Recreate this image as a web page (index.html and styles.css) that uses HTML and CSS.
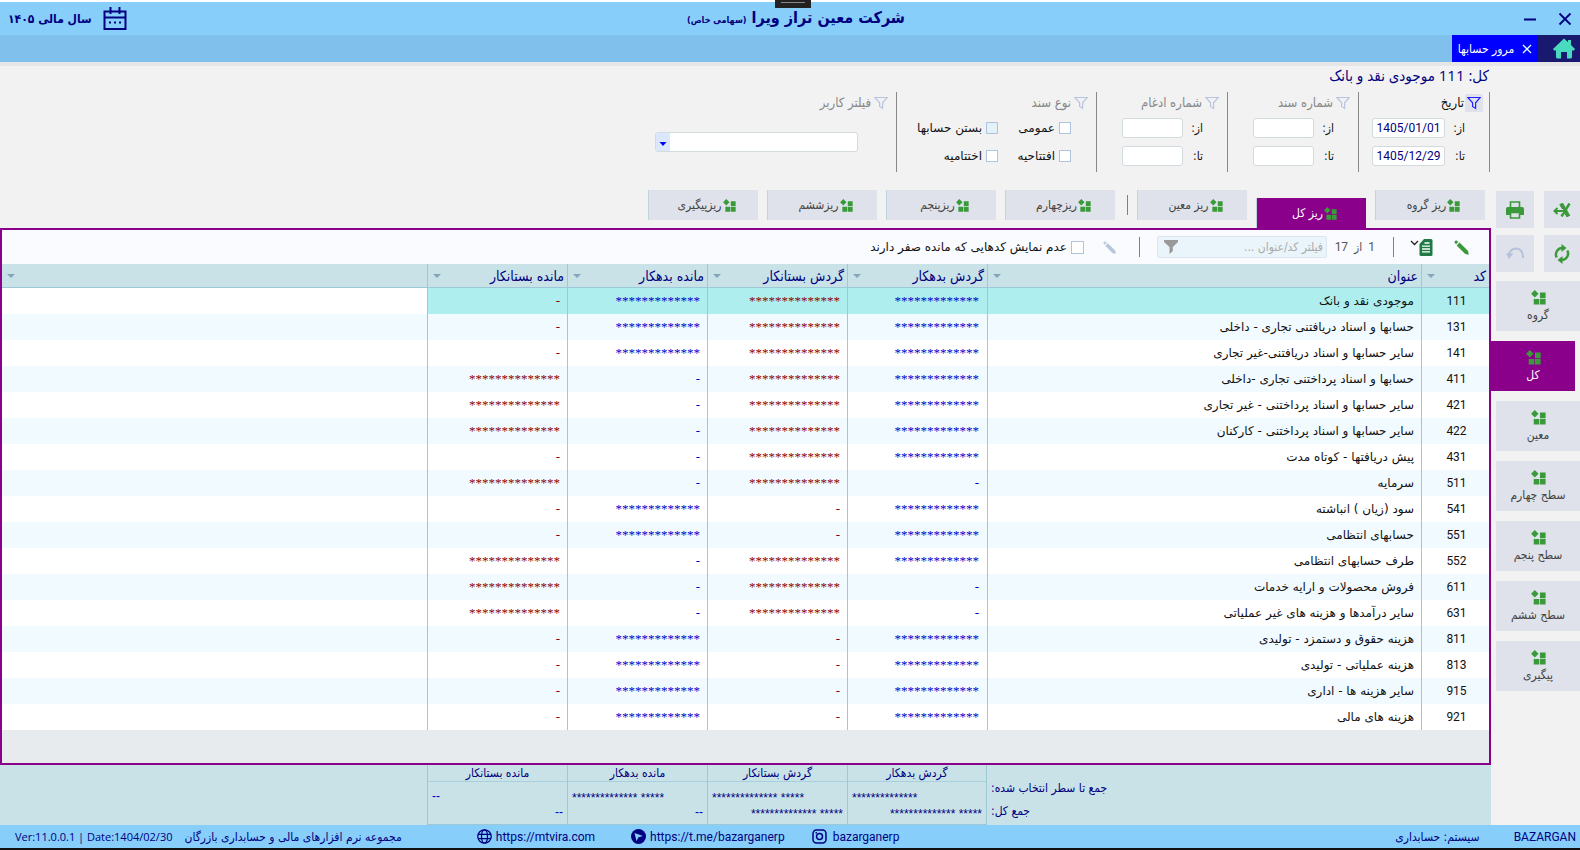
FILE: index.html
```html
<!DOCTYPE html>
<html lang="fa" dir="rtl">
<head>
<meta charset="utf-8">
<title>مرور حسابها</title>
<link rel="stylesheet" href="styles.css">
</head>
<body>
<svg class="defs" aria-hidden="true">
  <symbol id="level" viewBox="0 0 15 15"><path d="M3.800 0l3.700 3.700-3.700 3.700L.1 3.700zM9 2.500h5.600v5.700H9zM2.700 9h5.600v5.600H2.700zM9 9h5.600v5.600H9z" fill="#3a9a3a"/></symbol>
  <symbol id="funnel" viewBox="0 0 14 14"><path d="M.8 1.500h12.400L8.600 6.800v5.700L5.600 10.500V6.800z" fill="none" stroke="currentColor" stroke-width="1.200"/></symbol>
  <symbol id="pencil" viewBox="0 0 15 15"><path d="M.5 2.500Q.3.300 2.600.5L4.300 2 2 4.300zM2.600 5.400l2.900-2.900 8.600 8.400.7 3.800-3.600-.6z" fill="currentColor"/></symbol>
</svg>

<div class="app">
  <header class="titlebar">
    <div class="window-buttons">
      <button class="plain" aria-label="بستن"><svg width="14" height="14" viewBox="0 0 14 14"><path d="M1.500 1.500l11 11m0-11l-11 11" stroke="#000080" stroke-width="1.800"/></svg></button>
      <button class="plain" aria-label="کوچک کردن"><svg width="14" height="14" viewBox="0 0 14 14"><path d="M1 7.500h12" stroke="#000080" stroke-width="2"/></svg></button>
    </div>
    <h1>شرکت معین تراز ویرا <small>(سهامی خاص)</small></h1>
    <div class="year">
      <svg width="24" height="24" viewBox="0 0 24 24" fill="none" stroke="#000080" stroke-width="2"><path d="M1.500 4.500h21v17.500h-21zM1.500 10.500h21M7.500 0v7M16.500 0v7"/><path d="M6 15.500h2m3 0h2m3 0h2"/></svg>
      <strong>سال مالی ۱۴۰۵</strong>
    </div>
    <div class="handle"></div>
  </header>

  <nav class="tabbar">
    <button class="home" aria-label="خانه"><svg width="22" height="21" viewBox="0 0 22 21"><path d="M11 .5L15 4V2h3v5l4 4-1 1.500h-2V19q0 1.500-1.500 1.500H14V14H8v6.500H4.500Q3 20.500 3 19v-6.500H1L0 11z" fill="#48dbc0"/></svg></button>
    <button class="open-tab"><svg width="10" height="10" viewBox="0 0 10 10"><path d="M1 1l8 8m0-8l-8 8" stroke="#dff" stroke-width="1.300"/></svg>مرور حسابها</button>
  </nav>

  <div class="workspace">
    <h2 class="heading">کل: 111 موجودی نقد و بانک</h2>

    <section class="filters">
      <div class="group">
        <div class="group-title on"><button class="plain funnel"><svg width="14" height="14"><use href="#funnel"/></svg></button>تاریخ</div>
        <div class="field"><label for="d1">از:</label><input id="d1" class="date" dir="ltr" value="1405/01/01"></div>
        <div class="field"><label for="d2">تا:</label><input id="d2" class="date" dir="ltr" value="1405/12/29"></div>
      </div>
      <div class="group">
        <div class="group-title"><button class="plain funnel"><svg width="14" height="14"><use href="#funnel"/></svg></button>شماره سند</div>
        <div class="field"><label for="n1">از:</label><input id="n1"></div>
        <div class="field"><label for="n2">تا:</label><input id="n2"></div>
      </div>
      <div class="group">
        <div class="group-title"><button class="plain funnel"><svg width="14" height="14"><use href="#funnel"/></svg></button>شماره ادغام</div>
        <div class="field"><label for="m1">از:</label><input id="m1"></div>
        <div class="field"><label for="m2">تا:</label><input id="m2"></div>
      </div>
      <div class="group kinds">
        <div class="group-title"><button class="plain funnel"><svg width="14" height="14"><use href="#funnel"/></svg></button>نوع سند</div>
        <div class="checks">
          <label><input type="checkbox">عمومی</label>
          <label><input type="checkbox" class="tinted">بستن حسابها</label>
          <label><input type="checkbox">افتتاحیه</label>
          <label><input type="checkbox">اختتامیه</label>
        </div>
      </div>
      <div class="group user">
        <div class="group-title"><button class="plain funnel"><svg width="14" height="14"><use href="#funnel"/></svg></button><label for="user">فیلتر کاربر</label></div>
        <div class="combo"><select id="user"><option></option></select><svg width="14" height="18" viewBox="0 0 14 18"><path d="M3.500 9h7L7 13z" fill="#00f"/></svg></div>
      </div>
    </section>

    <div class="tabs">
      <button class="tab"><svg width="13" height="13"><use href="#level"/></svg>ریز گروه</button>
      <button class="tab current"><svg width="13" height="13"><use href="#level"/></svg>ریز کل</button>
      <button class="tab"><svg width="13" height="13"><use href="#level"/></svg>ریز معین</button>
      <span class="rule"></span>
      <button class="tab"><svg width="13" height="13"><use href="#level"/></svg>ریزچهارم</button>
      <button class="tab"><svg width="13" height="13"><use href="#level"/></svg>ریزپنجم</button>
      <button class="tab"><svg width="13" height="13"><use href="#level"/></svg>ریزششم</button>
      <button class="tab"><svg width="13" height="13"><use href="#level"/></svg>ریزپیگیری</button>
    </div>

    <aside class="side">
      <div class="tools">
        <button aria-label="اکسل"><svg width="18" height="14" viewBox="0 0 18 14" fill="none" stroke="#3a9a3a"><path d="M8 .5L15.500 13.500" stroke-width="4"/><path d="M16.500 .5L8.500 13.500" stroke-width="2.500"/><path d="M10 8H1.500M4.500 5L1.500 8l3 3" stroke="#dfe2ea" stroke-width="4"/><path d="M10 8H1.500M4.500 5L1.500 8l3 3" stroke-width="2"/></svg></button>
        <button aria-label="چاپ"><svg width="18" height="18" viewBox="0 0 18 18"><path d="M4.500 6V1h9v5" fill="none" stroke="#3a9a3a" stroke-width="1.600"/><path d="M2 6h14q2 0 2 2v6H0V8q0-2 2-2z" fill="#3a9a3a"/><path d="M4.500 11.500h9v5.500h-9z" fill="#dfe2ea" stroke="#3a9a3a" stroke-width="1.600"/></svg></button>
        <button aria-label="بازخوانی"><svg width="16" height="20" viewBox="0 0 16 20" fill="none" stroke="#3a9a3a" stroke-width="2.500"><path d="M2.700 13.500A6.500 6.500 0 0 1 9 4M13.300 6.500A6.500 6.500 0 0 1 7 16"/><path d="M7.500 0v8l5-4zM8.500 20v-8l-5 4z" fill="#3a9a3a" stroke="none"/></svg></button>
        <button aria-label="بازگشت"><svg width="18" height="13" viewBox="0 0 18 13" fill="none" stroke="#b4c2dc" stroke-width="2"><path d="M3 8Q4 1.500 10.500 1.500 17 2 17 11"/><path d="M0 6.500h7.500L3 12z" fill="#b4c2dc" stroke="none"/></svg></button>
      </div>
      <button class="level"><svg width="15" height="15"><use href="#level"/></svg>گروه</button>
      <button class="level current"><svg width="15" height="15"><use href="#level"/></svg>کل</button>
      <button class="level"><svg width="15" height="15"><use href="#level"/></svg>معین</button>
      <button class="level"><svg width="15" height="15"><use href="#level"/></svg>سطح چهارم</button>
      <button class="level"><svg width="15" height="15"><use href="#level"/></svg>سطح پنجم</button>
      <button class="level"><svg width="15" height="15"><use href="#level"/></svg>سطح ششم</button>
      <button class="level"><svg width="15" height="15"><use href="#level"/></svg>پیگیری</button>
    </aside>

    <main class="panel">
      <div class="toolbar">
        <button class="plain edit" aria-label="ویرایش"><svg width="15" height="15"><use href="#pencil"/></svg></button>
        <button class="plain sheet" aria-label="گزارش"><svg width="23" height="17" viewBox="0 0 23 17"><path d="M1 2l3.500 3.500L8 2" fill="none" stroke="#222" stroke-width="1.300"/><path d="M14 0h7q1.500 0 1.500 1.500v14q0 1.500-1.500 1.500h-10q-1.500 0-1.500-1.500V5z" fill="#1f7a45"/><path d="M14.500 4h5M12 7.200h8M12 10h8M12 12.800h8" stroke="#fff" stroke-width="1.300"/></svg></button>
        <span class="rule"></span>
        <span class="counter">1 &nbsp;از &nbsp;17</span>
        <label class="search"><input type="text" placeholder="فیلتر کد/عنوان ..." aria-label="فیلتر"><svg width="14" height="14" viewBox="0 0 14 14"><path d="M0 0h14v2L8.800 7v4L5.500 14V7L0 2z" fill="#999"/></svg></label>
        <span class="rule"></span>
        <button class="plain edit off" aria-label="ویرایش" disabled><svg width="13" height="13"><use href="#pencil"/></svg></button>
        <label class="zero"><input type="checkbox">عدم نمایش کدهایی که مانده صفر دارند</label>
      </div>
      <table class="grid">
        <colgroup><col class="c-code"><col class="c-title"><col class="c-num"><col class="c-num"><col class="c-num"><col class="c-num"><col></colgroup>
        <thead><tr><th><span>کد</span></th><th><span>عنوان</span></th><th><span>گردش بدهکار</span></th><th><span>گردش بستانکار</span></th><th><span>مانده بدهکار</span></th><th><span>مانده بستانکار</span></th><th><span></span></th></tr></thead>
        <tbody>
          <tr class="selected"><td>111</td><td>موجودی نقد و بانک</td><td>*************</td><td>**************</td><td>*************</td><td>-</td><td></td></tr>
          <tr><td>131</td><td>حسابها و اسناد دریافتنی تجاری - داخلی</td><td>*************</td><td>**************</td><td>*************</td><td>-</td><td></td></tr>
          <tr><td>141</td><td>سایر حسابها و اسناد دریافتنی-غیر تجاری</td><td>*************</td><td>**************</td><td>*************</td><td>-</td><td></td></tr>
          <tr><td>411</td><td>حسابها و اسناد پرداختنی تجاری -داخلی</td><td>*************</td><td>**************</td><td>-</td><td>**************</td><td></td></tr>
          <tr><td>421</td><td>سایر حسابها و اسناد پرداختنی - غیر تجاری</td><td>*************</td><td>**************</td><td>-</td><td>**************</td><td></td></tr>
          <tr><td>422</td><td>سایر حسابها و اسناد پرداختنی - کارکنان</td><td>*************</td><td>**************</td><td>-</td><td>**************</td><td></td></tr>
          <tr><td>431</td><td>پیش دریافتها - کوتاه مدت</td><td>*************</td><td>**************</td><td>-</td><td>-</td><td></td></tr>
          <tr><td>511</td><td>سرمایه</td><td>-</td><td>**************</td><td>-</td><td>**************</td><td></td></tr>
          <tr><td>541</td><td>سود (زیان ) انباشته</td><td>*************</td><td>-</td><td>*************</td><td>-</td><td></td></tr>
          <tr><td>551</td><td>حسابهای انتظامی</td><td>*************</td><td>-</td><td>*************</td><td>-</td><td></td></tr>
          <tr><td>552</td><td>طرف حسابهای انتظامی</td><td>*************</td><td>**************</td><td>-</td><td>**************</td><td></td></tr>
          <tr><td>611</td><td>فروش محصولات و ارایه خدمات</td><td>-</td><td>**************</td><td>-</td><td>**************</td><td></td></tr>
          <tr><td>631</td><td>سایر درآمدها و هزینه های غیر عملیاتی</td><td>-</td><td>**************</td><td>-</td><td>**************</td><td></td></tr>
          <tr><td>811</td><td>هزینه حقوق و دستمزد - تولیدی</td><td>*************</td><td>-</td><td>*************</td><td>-</td><td></td></tr>
          <tr><td>813</td><td>هزینه عملیاتی - تولیدی</td><td>*************</td><td>-</td><td>*************</td><td>-</td><td></td></tr>
          <tr><td>915</td><td>سایر هزینه ها - اداری</td><td>*************</td><td>-</td><td>*************</td><td>-</td><td></td></tr>
          <tr><td>921</td><td>هزینه های مالی</td><td>*************</td><td>-</td><td>*************</td><td>-</td><td></td></tr>
        </tbody>
      </table>
    </main>

    <section class="totals">
      <div class="labels"><span>جمع تا سطر انتخاب شده:</span><span>جمع کل:</span></div>
      <div class="total"><b>گردش بدهکار</b><span dir="ltr">**************</span><span dir="ltr">************** *****</span></div>
      <div class="total"><b>گردش بستانکار</b><span dir="ltr">************** *****</span><span dir="ltr">************** *****</span></div>
      <div class="total"><b>مانده بدهکار</b><span dir="ltr">************** *****</span><span class="none" dir="ltr">--</span></div>
      <div class="total"><b>مانده بستانکار</b><span class="none" dir="ltr">--</span><span class="none" dir="ltr">--</span></div>
    </section>
  </div>

  <footer class="statusbar">
    <span class="brand" dir="ltr">BAZARGAN</span>
    <span class="system">سیستم: حسابداری</span>
    <a href="#instagram" class="instagram" dir="ltr"><svg width="15" height="15" viewBox="0 0 15 15" fill="none" stroke="#000080" stroke-width="1.500"><rect x="1" y="1" width="13" height="13" rx="3.500"/><circle cx="7.500" cy="7.500" r="3"/><path d="M3.500 3.700h1.500"/></svg>bazarganerp</a>
    <a href="#telegram" class="telegram" dir="ltr"><svg width="15" height="15" viewBox="0 0 15 15"><circle cx="7.500" cy="7.500" r="7.500" fill="#000080"/><path d="M3.500 4l8.500 3-4.500 1.200L5.500 12z" fill="#87cefa"/></svg>https://t.me/bazarganerp</a>
    <a href="#site" dir="ltr"><svg width="15" height="15" viewBox="0 0 15 15" fill="none" stroke="#000080" stroke-width="1.300"><circle cx="7.500" cy="7.500" r="6.700"/><ellipse cx="7.500" cy="7.500" rx="3" ry="6.700"/><path d="M1 5.300h13M1 9.700h13"/></svg>https://mtvira.com</a>
    <span class="about">مجموعه نرم افزارهای مالی و حسابداری بازرگان</span>
    <span class="version" dir="ltr">Ver:11.0.0.1 | Date:1404/02/30</span>
  </footer>
</div>
</body>
</html>
```

FILE: styles.css
```css
* { box-sizing: border-box; }

body {
  margin: 0;
  background: #f2f2f2;
  color: #111;
  font: 12px/18px "DejaVu Sans Condensed", "DejaVu Sans", sans-serif;
}

button, input, select { font: inherit; color: inherit; margin: 0; }
button { border: 0; padding: 0; }
svg { display: block; flex: none; }
.defs { position: absolute; width: 0; height: 0; }
.plain { background: none; }
.rule { width: 1px; height: 20px; background: #808080; }

.app {
  display: flex;
  flex-direction: column;
  min-height: 100vh;
  border-top: 2px solid #fff;
  border-bottom: 2px solid #111;
}

/* title bar */
.titlebar {
  position: relative;
  display: grid;
  grid-template-columns: 1fr auto 1fr;
  align-items: center;
  height: 33px;
  padding: 0 8px;
  background: #87cefa;
  color: #000080;
}
.window-buttons { display: flex; gap: 21px; }
.titlebar h1 { margin: 0; padding-left: 12px; font-size: 16px; line-height: 28px; }
.titlebar small { font-size: 9px; }
.year { display: flex; justify-content: flex-end; align-items: center; gap: 11px; }
.year strong { font-size: 12px; }
.handle {
  position: absolute;
  top: -2px;
  left: 775px;
  width: 36px;
  height: 8px;
  background: linear-gradient(#888, #888) center 2px / 24px 1px no-repeat, #222;
}

.tabbar {
  display: flex;
  height: 31px;
  background: #7fc1ec;
  border-bottom: 4px solid #e6e6e6;
}
.tabbar button { display: flex; align-items: center; justify-content: center; }
.home { width: 42px; padding-left: 9px; background: #191970; }
.open-tab { width: 86px; gap: 8px; background: #00f; color: #fff; white-space: nowrap; }

/* workspace */
.workspace {
  flex: 1;
  display: grid;
  grid-template-columns: 89px minmax(0, 1fr);
  grid-template-rows: auto auto auto minmax(0, 1fr) auto;
}
.heading {
  grid-column: 2;
  margin: 0;
  padding: 0 2px 8px;
  color: #000080;
  font: 15px/18px "Open Sans", "DejaVu Sans Condensed", "DejaVu Sans", sans-serif;
}

.filters { grid-column: 2; display: flex; height: 80px; margin: 0 1px 18px; }
.group { width: 131px; padding-right: 6px; border-right: 1px solid #888; }
.group-title { display: flex; align-items: center; gap: 1px; height: 18px; margin: 2px 0 6px; color: #888; font-size: 13px; }
.group-title.on { color: #111; }
.funnel { display: grid; place-items: center; width: 18px; height: 18px; color: #b8c4e0; }
.on .funnel { background: #dfe2ea; border-radius: 2px; color: #22f; }
.field { display: flex; align-items: center; height: 20px; margin-bottom: 8px; padding-right: 18px; }
.field label { width: 20px; }
.field input {
  width: 61px;
  height: 20px;
  padding: 0 5px;
  border: 1px solid #d3dbdf;
  border-radius: 3px;
  background: #fff;
}
.field .date { width: 73px; padding: 0; color: #000080; font-family: Roboto, sans-serif; text-align: center; }
.kinds { width: 200px; }
.checks { display: grid; grid-template-columns: 73px auto; gap: 10px 0; margin: 7px 19px 0 0; }
.checks label, .zero { display: flex; align-items: center; gap: 4px; white-space: nowrap; }
.checks label { font-family: "DejaVu Sans", sans-serif; }
input[type="checkbox"] {
  appearance: none;
  width: 12px;
  height: 12px;
  border: 1px solid #b0c4de;
  background: #fff;
}
input.tinted { background: #e2f1f7; }
.user { width: 250px; }
.combo { position: relative; width: 203px; margin: 20px 32px 0 0; }
.combo select {
  display: block;
  appearance: none;
  width: 100%;
  height: 20px;
  border: 1px solid #d3dbdf;
  border-radius: 3px;
  background: #fff;
}
.combo svg { position: absolute; left: 1px; top: 1px; background: #dbe7fd; pointer-events: none; }

.tabs { grid-column: 2; display: flex; gap: 9px; height: 38px; padding-right: 6px; }
.tab {
  display: flex;
  align-items: center;
  justify-content: center;
  gap: 1px;
  width: 110px;
  height: 30px;
  padding-left: 6px;
  background: #dfe2ea;
  border-left: 1px solid #bdd5dc;
  color: #444;
}
.tab.current { align-self: flex-end; background: #8b008b; color: #fff; }
.tabs .rule { margin: 5px 0 0 3px; }

/* right hand levels */
.side {
  grid-column: 1;
  grid-row: 3 / 6;
  display: flex;
  flex-direction: column;
  gap: 10px;
  padding: 1px 0 0;
}
.tools { display: grid; grid-template-columns: 36px 38px; gap: 7px 10px; margin-bottom: -1px; }
.tools button { display: grid; place-items: center; height: 37px; background: #dfe2ea; }
.level {
  display: flex;
  flex-direction: column;
  align-items: center;
  justify-content: center;
  gap: 1px;
  width: 84px;
  height: 50px;
  padding-top: 2px;
  background: #dfe2ea;
  color: #444;
}
.level.current { margin-right: 5px; background: #8b008b; color: #fff; }

/* grid panel */
.panel {
  grid-column: 2;
  border: 2px solid #8b008b;
  background: #e7ebee;
}
.toolbar { display: flex; align-items: center; height: 34px; padding-right: 20px; background: #f9fbff; }
.edit { color: #3a9a3a; }
.edit.off { margin: 0 23px 0 19px; color: #b8c6dc; }
.sheet { margin: 0 21px 0 16px; }
.counter { width: 48px; margin-right: 18px; color: #555; font-family: Roboto, "DejaVu Sans Condensed", sans-serif; white-space: nowrap; }
.search {
  display: flex;
  align-items: center;
  width: 170px;
  height: 22px;
  margin-left: 17px;
  padding: 0 3px 0 6px;
  border: 1px solid #dde6ee;
  border-radius: 2px;
  background: #e9f4fb;
}
.search input { flex: 1; min-width: 0; padding: 0; border: 0; background: none; outline: 0; }
.search input::placeholder { color: #aaa; }
.zero { font-family: "DejaVu Sans", sans-serif; }
.zero input { width: 13px; height: 13px; }

.grid { width: 100%; border-collapse: separate; border-spacing: 0; table-layout: fixed; }
.c-code { width: 68px; }
.c-title { width: 434px; }
.c-num { width: 140px; }
.grid th {
  height: 24px;
  padding: 0 3px 0 5px;
  background: #c8e2e8;
  border-left: 1px solid #9cc8d8;
  border-bottom: 1px solid #9cc8d8;
  color: #000080;
  font-size: 14px;
  font-weight: 400;
}
.grid th span { display: flex; align-items: center; justify-content: space-between; white-space: nowrap; }
.grid th span::after { content: ""; border: 4px solid transparent; border-top-color: #86a5ba; border-bottom: 0; }
.grid th span:empty { justify-content: flex-end; }
.grid td { height: 26px; padding: 0 7px; border-left: 1px solid #9cc8d8; background: #fff; font-family: "DejaVu Sans", sans-serif; white-space: nowrap; }
.grid tr:nth-child(even) td { background: #f1faff; }
.grid tr.selected td { background: #afeeee; }
.grid tr.selected td:last-child { background: #fff; }
.grid th:last-child, .grid td:last-child { border-left: 0; }
.grid td:first-child { padding-right: 5px; font-family: Roboto, sans-serif; text-align: center; }
.grid td:nth-child(n+3) { font: 13px/18px "Liberation Serif", serif; }
.grid td:nth-child(3) { padding-right: 8px; color: #0000cd; }
.grid td:nth-child(5) { color: #0000cd; }
.grid td:nth-child(4), .grid td:nth-child(6) { color: #8b0000; }

.totals {
  grid-column: 2;
  display: grid;
  grid-template-columns: 504px repeat(4, 140px);
  height: 60px;
  background: #c8e2e8;
  color: #000080;
}
.labels { display: flex; flex-direction: column; align-items: flex-end; gap: 5px; padding: 14px 0 0 4px; }
.total {
  display: flex;
  flex-direction: column;
  border-left: 1px solid #9cc8d8;
  border-bottom: 1px solid #9cc8d8;
  font: 12px/18px "Liberation Sans", sans-serif;
}
.total:nth-child(2) { border-right: 1px solid #9cc8d8; }
.total b {
  height: 17px;
  margin-bottom: 7px;
  border-bottom: 1px solid #a8d0dc;
  font: 12px/17px "DejaVu Sans Condensed", "DejaVu Sans", sans-serif;
  text-align: center;
}
.total span { padding: 0 4px; height: 16px; }
.total b + span { text-align: left; }
.total b + span + span { text-align: right; }
.total .none { color: #0000cd; line-height: 14px; }

.statusbar {
  display: flex;
  align-items: center;
  height: 23px;
  padding: 0 4px 0 15px;
  background: #87cefa;
  color: #000080;
  white-space: nowrap;
}
.statusbar a { display: flex; align-items: center; gap: 4px; margin-left: 27px; color: inherit; text-decoration: none; }
.statusbar a, .brand { font-family: Roboto, sans-serif; }
.statusbar .instagram { gap: 6px; margin-right: auto; }
.statusbar .telegram { margin-left: 36px; }
.system { margin-right: 34px; }
.about { margin: 0 48px 0 12px; }
.version { font: 11px/18px "Open Sans", sans-serif; }
```
